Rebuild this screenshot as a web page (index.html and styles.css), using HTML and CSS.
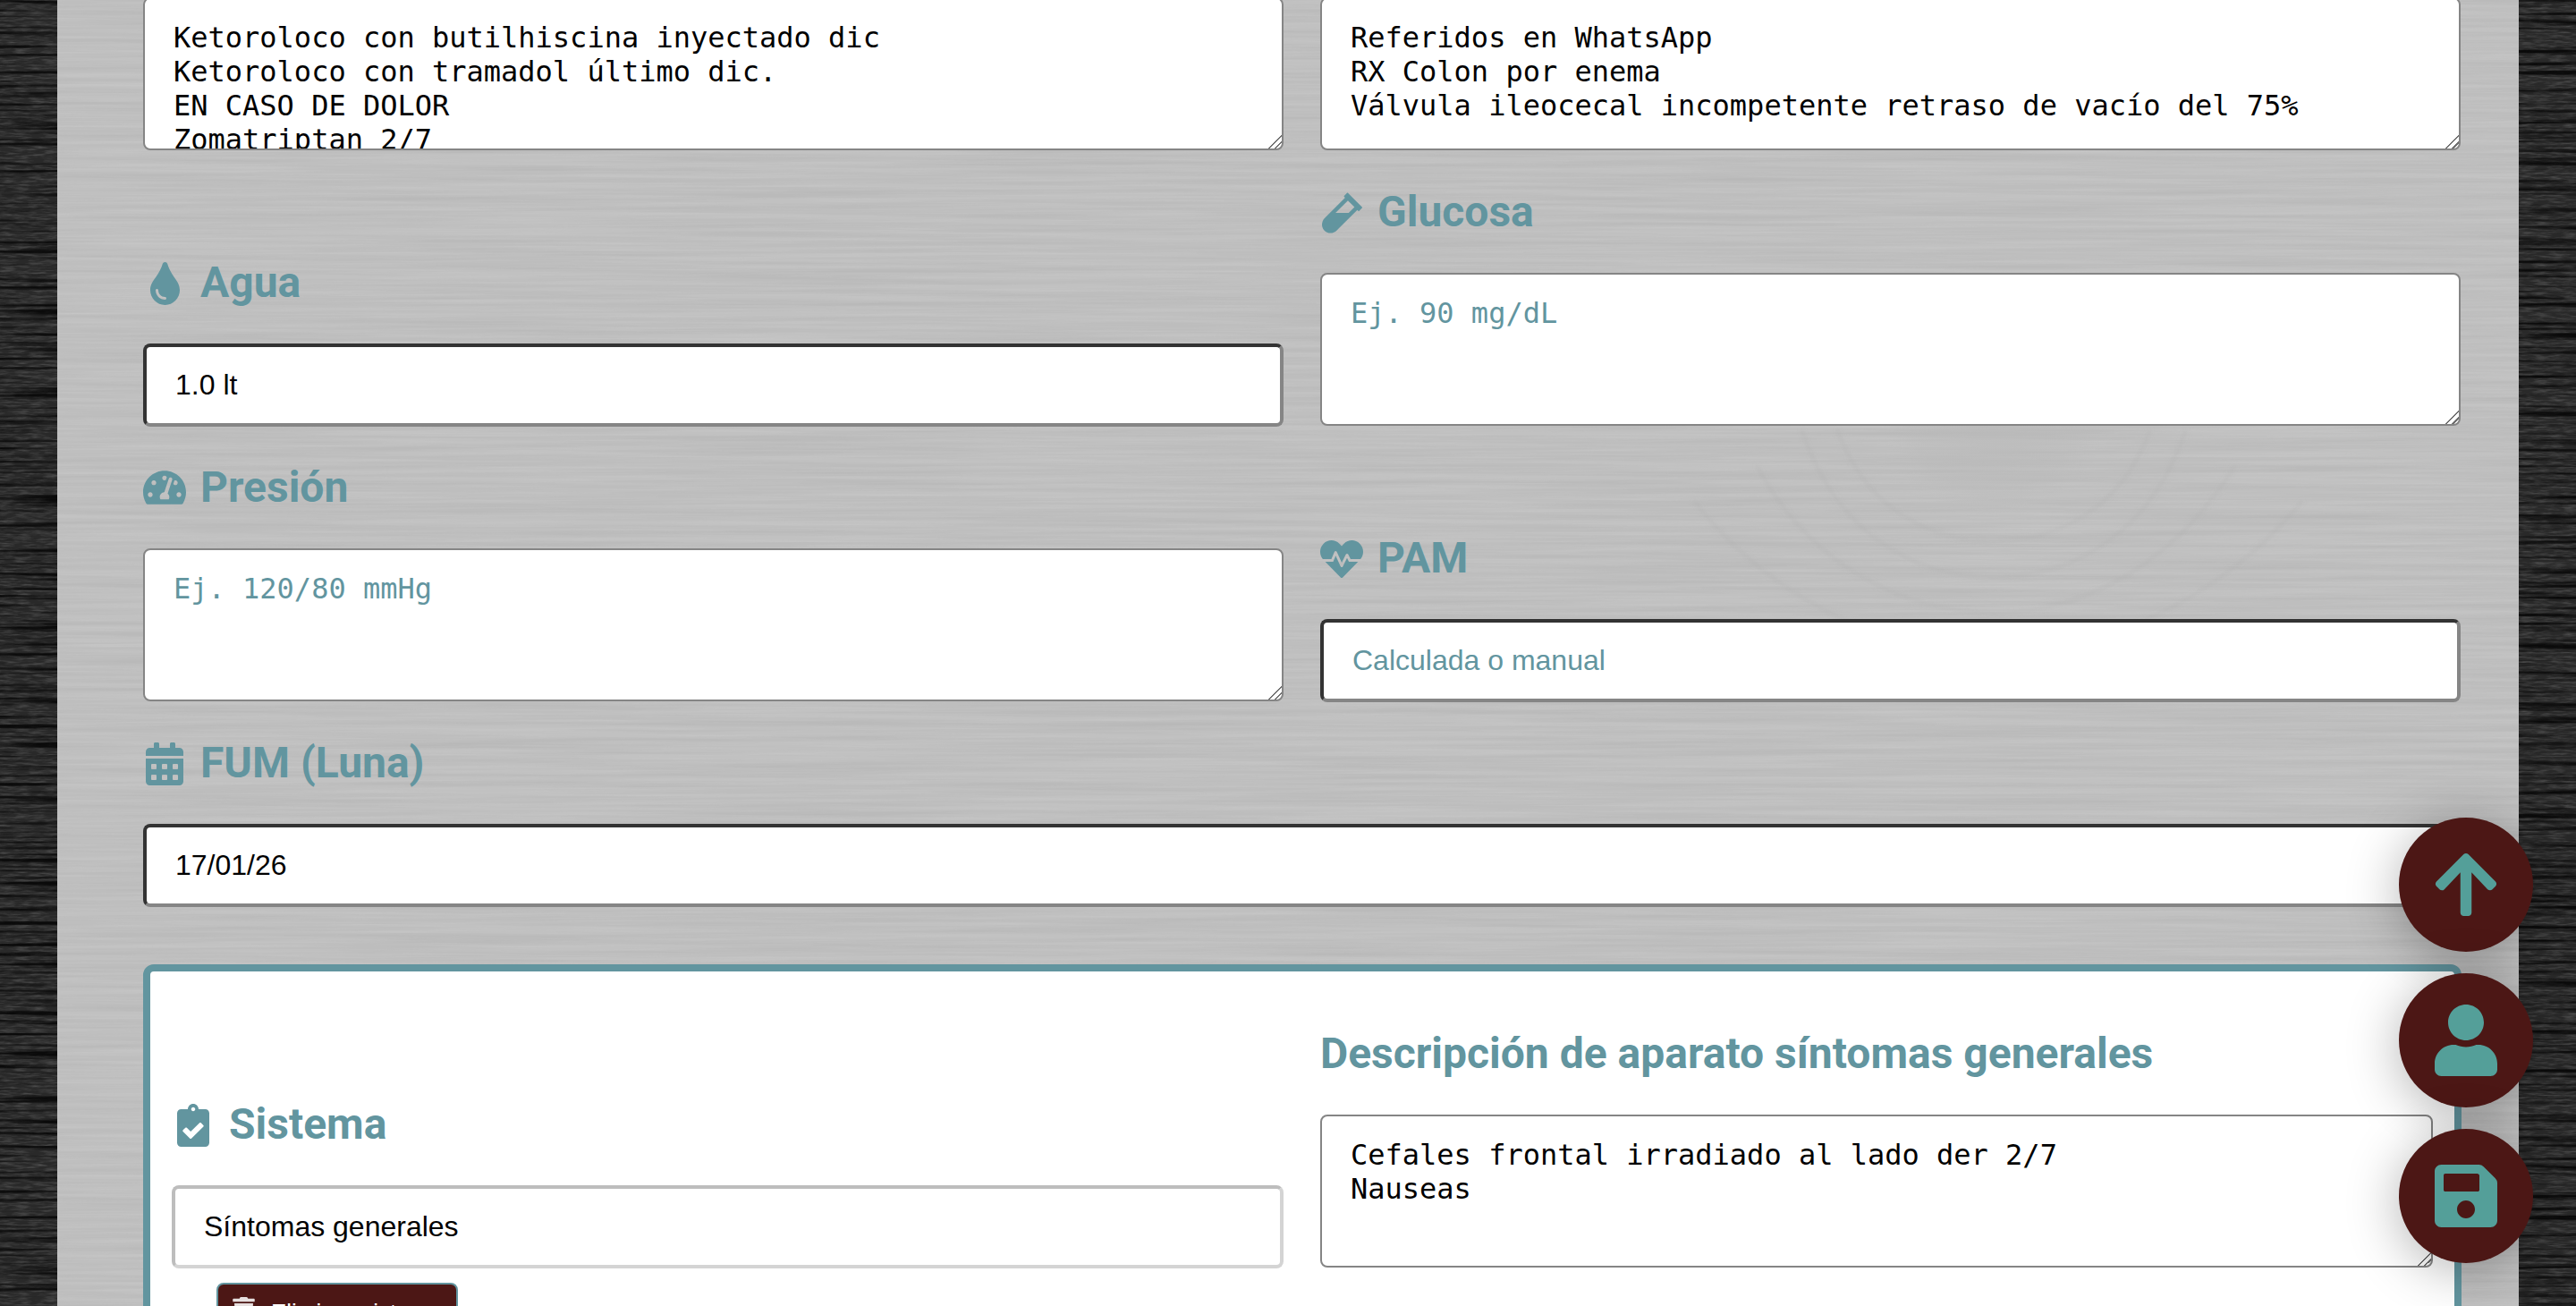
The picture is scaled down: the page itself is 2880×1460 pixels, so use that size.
FILE: index.html
```html
<!DOCTYPE html>
<html lang="es">
<head>
<meta charset="utf-8">
<title>Registro</title>
<link rel="stylesheet" href="styles.css">
</head>
<body>
<svg class="wood" width="2880" height="1460" aria-hidden="true">
  <defs>
    <filter id="grainLight" x="0" y="0" width="100%" height="100%">
      <feTurbulence type="fractalNoise" baseFrequency="0.003 0.16" numOctaves="4" seed="7"/>
      <feColorMatrix type="matrix" values="0 0 0 0 0  0 0 0 0 0  0 0 0 0 0  1.1 0 0 0 -0.35"/>
    </filter>
    <filter id="grainHigh" x="0" y="0" width="100%" height="100%">
      <feTurbulence type="fractalNoise" baseFrequency="0.007 0.42" numOctaves="3" seed="21"/>
      <feColorMatrix type="matrix" values="0 0 0 0 1  0 0 0 0 1  0 0 0 0 1  1.3 0 0 0 -0.5"/>
    </filter>
    <filter id="grainDark" x="0" y="0" width="100%" height="100%">
      <feTurbulence type="fractalNoise" baseFrequency="0.06 0.45" numOctaves="3" seed="3"/>
      <feColorMatrix type="matrix" values="0 0 0 0 1  0 0 0 0 1  0 0 0 0 1  1.5 0 0 0 -0.6"/>
    </filter>
    <filter id="grainBlack" x="0" y="0" width="100%" height="100%">
      <feTurbulence type="fractalNoise" baseFrequency="0.005 0.2" numOctaves="2" seed="12"/>
      <feColorMatrix type="matrix" values="0 0 0 0 0  0 0 0 0 0  0 0 0 0 0  4 0 0 0 -1.9"/>
    </filter>
    <filter id="soft" x="-10%" y="-10%" width="120%" height="120%">
      <feGaussianBlur stdDeviation="2"/>
    </filter>
    <radialGradient id="knot">
      <stop offset="0" stop-color="#b9b9b9" stop-opacity=".6"/>
      <stop offset=".75" stop-color="#bbbbbb" stop-opacity=".45"/>
      <stop offset="1" stop-color="#bdbdbd" stop-opacity="0"/>
    </radialGradient>
  </defs>
  <rect width="2880" height="1460" fill="#292929"/>
  <rect width="2880" height="1460" filter="url(#grainDark)" opacity=".22"/>
  <rect width="2880" height="1460" filter="url(#grainBlack)" opacity=".75"/>
  <rect x="64" width="2752" height="1460" fill="#c1c1c1"/>
  <svg x="64" width="2752" height="1460">
    <rect width="2752" height="1460" filter="url(#grainLight)" opacity=".07"/>
    <rect width="2752" height="1460" filter="url(#grainHigh)" opacity=".1"/>
    <ellipse cx="2165" cy="470" rx="125" ry="105" fill="url(#knot)"/>
    <g class="rings" filter="url(#soft)">
      <path d="M1990 480c30 85 100 125 175 125s145-40 175-125"/>
      <path d="M1950 480c40 120 130 165 215 165s175-45 215-165"/>
      <path d="M1900 520c60 115 170 165 265 165s200-50 270-165"/>
      <path d="M1830 560c90 115 220 170 335 170s250-55 345-170"/>
    </g>
  </svg>
</svg>

<main class="sheet">
  <form class="form-grid">
    <div class="field">
      <textarea class="area">Ketoroloco con butilhiscina inyectado dic
Ketoroloco con tramadol último dic.
EN CASO DE DOLOR
Zomatriptan 2/7
Paracetamol</textarea>
    </div>
    <div class="field">
      <textarea class="area">Referidos en WhatsApp
RX Colon por enema
Válvula ileocecal incompetente retraso de vacío del 75%</textarea>
    </div>

    <div class="field">
      <label class="label">
        <span class="icon"><svg viewBox="0 0 352 512"><path d="M205.22 22.09c-7.94-28.78-49.44-30.12-58.44 0C100.01 179.85 0 222.72 0 333.91 0 432.35 78.72 512 176 512s176-79.65 176-178.09c0-111.75-99.79-153.34-146.78-311.82zM176 448c-61.75 0-112-50.25-112-112 0-8.84 7.16-16 16-16s16 7.16 16 16c0 44.11 35.89 80 80 80 8.84 0 16 7.16 16 16s-7.16 16-16 16z"/></svg></span>
        Agua
      </label>
      <input class="line" type="text" value="1.0 lt">
    </div>
    <div class="field">
      <label class="label">
        <span class="icon"><svg viewBox="0 0 480 512"><path d="M477.7 186.1L309.5 18.3c-3.1-3.1-8.2-3.1-11.3 0l-34 33.9c-3.1 3.1-3.1 8.2 0 11.3l11.2 11.1L33 316.5c-38.8 38.7-45.1 102-9.4 143.5 20.6 24 49.5 36 78.4 35.9 26.4 0 52.8-10 72.9-30.1l246.3-245.7 11.2 11.1c3.1 3.1 8.2 3.1 11.3 0l34-33.9c3.1-3 3.1-8.1 0-11.2zM318 256H161l148-147.7 78.5 78.3L318 256z"/></svg></span>
        Glucosa
      </label>
      <textarea class="area" placeholder="Ej. 90 mg/dL"></textarea>
    </div>

    <div class="field">
      <label class="label">
        <span class="icon icon-gauge"><svg viewBox="0 0 576 512"><path d="M288 32C128.94 32 0 160.94 0 320c0 52.8 14.25 102.26 39.06 144.8 5.61 9.62 16.3 15.2 27.44 15.2h443c11.14 0 21.83-5.58 27.44-15.2C561.75 422.26 576 372.8 576 320c0-159.06-128.94-288-288-288zm0 64c14.71 0 26.58 10.13 30.32 23.65-1.11 2.26-2.64 4.23-3.45 6.67l-9.22 27.67c-5.13 3.49-10.97 6.01-17.64 6.01-17.67 0-32-14.33-32-32S270.33 96 288 96zM96 384c-17.67 0-32-14.33-32-32s14.33-32 32-32 32 14.33 32 32-14.33 32-32 32zm48-160c-17.67 0-32-14.33-32-32s14.33-32 32-32 32 14.33 32 32-14.33 32-32 32zm246.77-72.41l-61.33 184C343.13 347.33 352 364.54 352 384c0 11.72-3.38 22.55-8.88 32H232.88c-5.5-9.45-8.88-20.28-8.88-32 0-33.94 26.5-61.43 59.9-63.59l61.34-184.01c4.17-12.56 17.73-19.45 30.36-15.17 12.57 4.19 19.35 17.77 15.17 30.36zm14.66 57.2l15.52-46.55c3.47-1.29 7.13-2.23 11.05-2.23 17.67 0 32 14.33 32 32s-14.33 32-32 32c-11.38-.01-20.89-6.28-26.57-15.22zM480 384c-17.67 0-32-14.33-32-32s14.33-32 32-32 32 14.33 32 32-14.33 32-32 32z"/></svg></span>
        Presión
      </label>
      <textarea class="area" placeholder="Ej. 120/80 mmHg"></textarea>
    </div>
    <div class="field">
      <label class="label">
        <span class="icon"><svg viewBox="0 0 512 512"><path d="M320.2 243.8l-49.7 99.4c-6 12.1-23.4 11.7-28.9-.6l-56.9-126.3-30 71.7H60.6l182.5 186.5c7.1 7.3 18.6 7.3 25.7 0L451.4 288H342.3l-22.1-44.2zM473.7 73.9l-2.4-2.5c-51.5-52.6-135.8-52.6-187.4 0L256 100l-27.9-28.5c-51.5-52.7-135.9-52.7-187.4 0l-2.4 2.4C-10.4 123.7-12.5 203 31 256h102.4l35.9-86.2c5.4-12.9 23.6-13.2 29.4-.4l58.2 129.3 49-97.9c5.9-11.8 22.7-11.8 28.6 0l27.6 55.2H481c43.5-53 41.4-132.3-7.3-182.1z"/></svg></span>
        PAM
      </label>
      <input class="line" type="text" placeholder="Calculada o manual">
    </div>

    <div class="field field-wide">
      <label class="label">
        <span class="icon"><svg viewBox="0 0 448 512"><path d="M0 464c0 26.5 21.5 48 48 48h352c26.5 0 48-21.5 48-48V192H0v272zm320-196c0-6.6 5.4-12 12-12h40c6.6 0 12 5.4 12 12v40c0 6.6-5.4 12-12 12h-40c-6.6 0-12-5.4-12-12v-40zm0 128c0-6.6 5.4-12 12-12h40c6.6 0 12 5.4 12 12v40c0 6.6-5.4 12-12 12h-40c-6.6 0-12-5.4-12-12v-40zM192 268c0-6.6 5.4-12 12-12h40c6.6 0 12 5.4 12 12v40c0 6.6-5.4 12-12 12h-40c-6.6 0-12-5.4-12-12v-40zm0 128c0-6.6 5.4-12 12-12h40c6.6 0 12 5.4 12 12v40c0 6.6-5.4 12-12 12h-40c-6.6 0-12-5.4-12-12v-40zM64 268c0-6.6 5.4-12 12-12h40c6.6 0 12 5.4 12 12v40c0 6.6-5.4 12-12 12H76c-6.6 0-12-5.4-12-12v-40zm0 128c0-6.6 5.4-12 12-12h40c6.6 0 12 5.4 12 12v40c0 6.6-5.4 12-12 12H76c-6.6 0-12-5.4-12-12v-40zM400 64h-48V16c0-8.8-7.2-16-16-16h-32c-8.8 0-16 7.2-16 16v48H160V16c0-8.8-7.2-16-16-16h-32c-8.8 0-16 7.2-16 16v48H48C21.5 64 0 85.5 0 112v48h448v-48c0-26.5-21.5-48-48-48z"/></svg></span>
        FUM (Luna)
      </label>
      <input class="line" type="text" value="17/01/26">
    </div>
  </form>

  <section class="card">
    <div class="card-grid">
      <div class="field">
        <label class="label">
          <span class="icon"><svg viewBox="0 0 384 512"><path d="M336 64h-80c0-35.3-28.7-64-64-64s-64 28.7-64 64H48C21.5 64 0 85.5 0 112v352c0 26.5 21.5 48 48 48h288c26.5 0 48-21.5 48-48V112c0-26.5-21.5-48-48-48zM192 40c13.3 0 24 10.7 24 24s-10.7 24-24 24-24-10.7-24-24 10.7-24 24-24zm121.2 231.8l-143 141.8c-4.7 4.7-12.3 4.6-17-.1l-82.6-83.3c-4.7-4.7-4.6-12.3.1-17L99.1 285c4.7-4.7 12.3-4.6 17 .1l46 46.4 106-105.2c4.7-4.7 12.3-4.6 17 .1l28.2 28.4c4.7 4.8 4.6 12.3-.1 17z"/></svg></span>
          Sistema
        </label>
        <input class="line line-soft" type="text" value="Síntomas generales">
      </div>
      <div class="field">
        <label class="label">Descripción de aparato síntomas generales</label>
        <textarea class="area">Cefales frontal irradiado al lado der 2/7
Nauseas</textarea>
      </div>
    </div>
    <button class="remove" type="button">
      <svg viewBox="0 0 448 512"><path d="M432 32H312l-9.4-18.7A24 24 0 0 0 281.1 0H166.8a23.72 23.72 0 0 0-21.4 13.3L136 32H16A16 16 0 0 0 0 48v32a16 16 0 0 0 16 16h416a16 16 0 0 0 16-16V48a16 16 0 0 0-16-16zM53.2 467a48 48 0 0 0 47.9 45h245.8a48 48 0 0 0 47.9-45L416 128H32z"/></svg>
      <span class="remove-text">Eliminar sistema</span>
    </button>
  </section>
</main>

<nav class="fabs">
  <button class="fab" type="button" aria-label="Subir"><svg class="fab-icon" viewBox="0 0 448 512"><path d="M34.9 289.5l-22.2-22.2c-9.4-9.4-9.4-24.6 0-33.9L207 39c9.4-9.4 24.6-9.4 33.9 0l194.3 194.3c9.4 9.4 9.4 24.6 0 33.9L413 289.4c-9.5 9.5-25 9.3-34.3-.4L264 168.6V456c0 13.3-10.7 24-24 24h-32c-13.3 0-24-10.7-24-24V168.6L69.2 289.1c-9.3 9.8-24.8 10-34.3.4z"/></svg></button>
  <button class="fab" type="button" aria-label="Paciente"><svg class="fab-icon" viewBox="0 0 448 512"><path d="M224 256c70.7 0 128-57.3 128-128S294.7 0 224 0 96 57.3 96 128s57.3 128 128 128zm89.6 32h-16.7c-22.2 10.2-46.9 16-72.9 16s-50.6-5.8-72.9-16h-16.7C60.2 288 0 348.2 0 422.4V464c0 26.5 21.5 48 48 48h352c26.5 0 48-21.5 48-48v-41.6c0-74.2-60.2-134.4-134.4-134.4z"/></svg></button>
  <button class="fab" type="button" aria-label="Guardar"><svg class="fab-icon" viewBox="0 0 448 512"><path d="M433.941 129.941l-83.882-83.882A48 48 0 0 0 316.118 32H48C21.49 32 0 53.49 0 80v352c0 26.51 21.49 48 48 48h352c26.51 0 48-21.49 48-48V163.882a48 48 0 0 0-14.059-33.941zM224 416c-35.346 0-64-28.654-64-64 0-35.346 28.654-64 64-64s64 28.654 64 64c0 35.346-28.654 64-64 64zm96-304.52V212c0 6.627-5.373 12-12 12H76c-6.627 0-12-5.373-12-12V108c0-6.627 5.373-12 12-12h228.52c3.183 0 6.235 1.264 8.485 3.515l3.48 3.48A11.996 11.996 0 0 1 320 111.48z"/></svg></button>
</nav>
</body>
</html>
```

FILE: styles.css
```css
* { box-sizing: border-box; }

html, body {
  margin: 0;
  height: 1460px;
  overflow: hidden;
  background: #292929;
}

body {
  position: relative;
  font-family: "Liberation Sans", Arial, sans-serif;
}

.wood {
  position: absolute;
  inset: 0;
  display: block;
}

.rings path {
  fill: none;
  stroke: #a4a4a4;
  stroke-width: 3;
  opacity: .22;
}

.sheet {
  position: relative;
  margin: -3px 64px 0;
  padding: 0 64px 0 96px;
}

.form-grid {
  display: grid;
  grid-template-columns: 1275px 1275px;
  column-gap: 41px;
  row-gap: 44px;
  align-items: end;
}

.field {
  display: flex;
  flex-direction: column;
  min-width: 0;
}

.field-wide {
  grid-column: 1 / -1;
}

.label {
  display: flex;
  align-items: center;
  height: 48px;
  margin: 1px 0 44px;
  font-family: Roboto, sans-serif;
  font-weight: 700;
  font-size: 48px;
  line-height: 48px;
  color: #62959f;
}

.icon {
  flex: none;
  display: flex;
  justify-content: center;
  align-items: center;
  width: 48px;
  height: 48px;
  margin: 2px 16px 0 0;
}

.icon-gauge {
  margin-top: -1px;
}

.icon svg {
  display: block;
  height: 48px;
  max-width: 48px;
  fill: #62959f;
}

.area {
  display: block;
  width: 100%;
  height: 171px;
  padding: 24px 32px;
  border: 2px solid #858585;
  border-radius: 8px;
  background: #fff;
  color: #000;
  font-family: "DejaVu Sans Mono", monospace;
  font-size: 32px;
  overflow: hidden;
  resize: vertical;
  outline: none;
}

.area::-webkit-resizer {
  background: linear-gradient(135deg,
    transparent 47%, #707070 47%, #707070 55%,
    transparent 55%, transparent 72%, #707070 72%, #707070 80%,
    transparent 80%);
}

.line {
  display: block;
  width: 100%;
  height: 93px;
  margin-bottom: -1px;
  padding: 0 32px;
  border-width: 4px;
  border-style: solid;
  border-color: #333 #858585 #858585 #333;
  border-radius: 8px;
  background: #fff;
  color: #000;
  font-family: "Liberation Sans", Arial, sans-serif;
  font-size: 32px;
  outline: none;
}

.line-soft {
  border-color: #bdbdbd #d4d4d4 #d4d4d4 #bdbdbd;
}

.area::placeholder,
.line::placeholder {
  color: #62959f;
  opacity: 1;
}

.card {
  margin-top: 65px;
  border: 8px solid #62959f;
  border-radius: 12px;
  background: #fff;
  padding: 67px 24px 0;
  height: 500px;
}

.card-grid {
  display: grid;
  grid-template-columns: 1243px 1244px;
  column-gap: 41px;
  align-items: end;
}

.remove {
  display: flex;
  align-items: flex-start;
  gap: 18px;
  width: 270px;
  height: 60px;
  margin: 17px 0 0 50px;
  padding: 14px 16px;
  border: 2px solid #62959f;
  border-radius: 8px;
  background: #4c1715;
  color: #fff;
  font-family: "Liberation Sans", Arial, sans-serif;
  font-size: 26px;
  white-space: nowrap;
}

.remove svg {
  flex: none;
  width: 25px;
  height: 28px;
  fill: #e6dfdf;
}

.remove-text {
  margin-top: 2px;
}

.fabs {
  position: fixed;
  right: 48px;
  bottom: 48px;
  display: flex;
  flex-direction: column;
  gap: 24px;
}

.fab {
  display: flex;
  justify-content: center;
  align-items: center;
  width: 150px;
  height: 150px;
  padding: 0;
  border: 0;
  border-radius: 50%;
  background: #4c1715;
  box-shadow: 0 8px 60px rgba(0, 0, 0, .3);
}

.fab-icon {
  display: block;
  width: 70px;
  height: 80px;
  fill: #549f99;
}
```
